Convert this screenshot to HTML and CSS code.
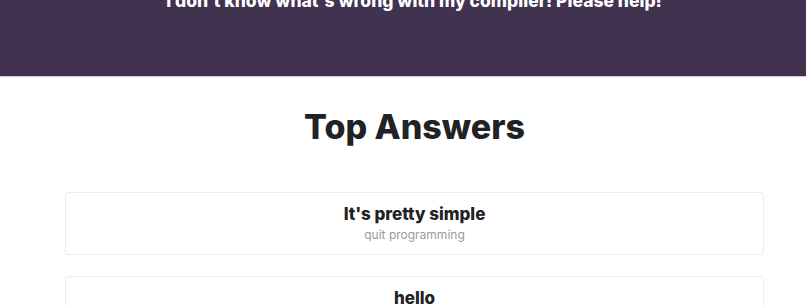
FILE: index.html
```html
<!DOCTYPE html>
<html lang="en">

<head>
    <meta charset="UTF-8">
    <meta name="viewport" content="width=device-width, initial-scale=1.0">
    <title>Question</title>
    <link rel="stylesheet" href="styles.css">
</head>

<body>

    <div id="question">
        <h2 class="question-title">I don't know what's wrong with my compiler! Please help!</h2>
    </div>

    <div id="answers">
        <h1 class="answers-title">Top Answers</h1>

        <div class="answer">
            <h3 class="answer-title">It's pretty simple</h3>
            <p class="answer-body">quit programming</p>
        </div>

        <div class="answer">
            <h3 class="answer-title">hello</h3>
            <p class="answer-body">world</p>
        </div>
    </div>

</body>

</html>
```

FILE: styles.css
```css
body,
html {
    margin: 0;
    padding: 0;
    overflow: hidden;
    font-family: Inter, "Open Sans", sans-serif;
    color: #212226;
}

#question {
    height: 76px;
    background: #413250;
    border-bottom: 1px solid #cfc6dc;
    display: flex;
    justify-content: center;
    align-items: flex-start;
    padding-left: 22px;
}

.question-title {
    margin: -10px 0 0 0;
    color: white;
    font-size: 17.5px;
    font-weight: 800;
}

#answers {
    padding: 29px 42px 0 65px;
}

.answers-title {
    margin: 0 0 45px 0;
    text-align: center;
    font-size: 34px;
    font-weight: 800;
}

.answer {
    border: 1px solid #ececec;
    border-radius: 3px;
    text-align: center;
    padding: 11px 0 12px 0;
    margin-bottom: 21px;
}

.answer-title {
    margin: 0;
    font-size: 17px;
    font-weight: 800;
}

.answer-body {
    margin: 3px 0 0 0;
    font-size: 12px;
    color: #9a9a9a;
}
```
